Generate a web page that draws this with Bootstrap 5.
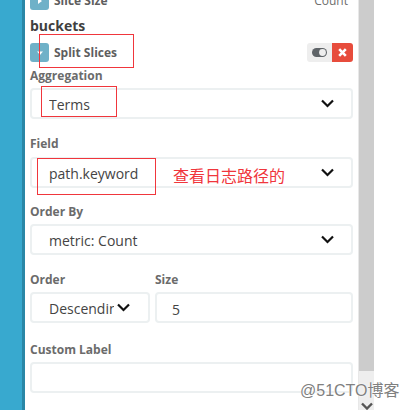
<!doctype html>
<html lang="zh">
<head>
<meta charset="utf-8">
<title>Split Slices</title>
<link rel="stylesheet" href="https://cdn.jsdelivr.net/npm/bootstrap@5.3.0/dist/css/bootstrap.min.css">
<style>
html,body{margin:0;height:410px;overflow:hidden;background:#fff;font-family:"Open Sans","Noto Sans CJK SC",sans-serif}
.stage{width:409px;height:410px;overflow:hidden}
.rail{width:25px;background:#38a9cf;border-right:3px solid #2a87a6;flex:none}
.pane{width:333px;flex:none;padding:0 5px;margin-top:-9px}
.bar{width:16px;flex:none;background:#eee;border-left:1px solid #e8e8e8}
.thumb{height:371px;background:#ccc}
.arrow-slot{height:39px;padding-top:31px}
.metric-row{height:19px}
.chip{width:19px;height:19px;border-radius:3px;background:#6fb1c8;flex:none}
.metric-name{font-size:12px;font-weight:700;color:#5e5e5e;line-height:19px;margin-left:5px}
.metric-count{font-size:12px;color:#6e6e6e;padding-right:5px}
.sect{font-size:14px;font-weight:700;color:#3f3f3f;line-height:19px;margin:6px 0 8px}
.tools{width:46px;height:19px;border-radius:3px;overflow:hidden}
.tool-a{width:25px;background:#eee}
.tool-b{width:21px;background:#e74c3c}
.lbl{display:block;font-size:12px;font-weight:700;color:#6b6b6b;line-height:16px;margin:0 0 4px}
.lbl-top{margin-top:6px}
.lbl-wide{margin-bottom:5px}
.form-select.fld,.form-control.fld{height:31px;border:2px solid #ecf0f1;border-radius:4px;font-size:14px;color:#444;padding:3px 0 2px 17px;box-shadow:none;background-color:#fff}
.form-select.fld{padding-right:34px;background-size:13px 9px;background-position:right 17px top 9px;background-image:url("data:image/svg+xml,%3csvg xmlns='http://www.w3.org/2000/svg' viewBox='0 0 13 9'%3e%3cpath fill='none' stroke='%23111' stroke-width='2.2' d='M1 1.5l5.5 5.5 5.5-5.5'/%3e%3c/svg%3e")}
.form-select.fld.tight{background-position:right 18px top 9px}
.form-control.num{padding-left:15px;padding-top:5px}
.gap-a{margin-bottom:17px}
.gap-c{margin-bottom:16px}
.gap-b{margin-bottom:19px}
.col-order{width:120px;flex:none}
.col-size{flex:1;margin-left:5px}
.mark-box{position:absolute;border:1px solid #f0363c;pointer-events:none}
.box-a{left:39px;top:34px;width:95px;height:34px}
.box-b{left:41px;top:86px;width:76px;height:31px}
.box-c{left:37px;top:158px;width:119px;height:37px}
.note{position:absolute;left:173px;top:164px;font-size:16px;line-height:22px;color:#f0363c;font-family:"Noto Sans CJK SC",sans-serif;white-space:nowrap}
.stamp{position:absolute;left:300px;top:381px;font-size:16px;line-height:20px;color:#808080;font-family:"Liberation Sans","Noto Sans CJK SC",sans-serif;white-space:nowrap;text-shadow:0 0 1px #fff,0 0 2px #fff}
</style>
</head>
<body>
<div class="stage d-flex position-relative">
  <div class="rail"></div>
  <div class="pane">
    <div class="metric-row d-flex align-items-center">
      <span class="chip d-flex align-items-center justify-content-center"><svg width="8" height="8" viewBox="0 0 8 8"><path d="M2 1l4 3-4 3z" fill="#fff"/></svg></span>
      <span class="metric-name flex-grow-1">Slice Size</span>
      <span class="metric-count">Count</span>
    </div>
    <div class="sect">buckets</div>
    <div class="metric-row d-flex align-items-center">
      <span class="chip d-flex align-items-center justify-content-center"><svg width="8" height="8" viewBox="0 0 8 8"><path d="M1 2.5h6l-3 3.5z" fill="#fff"/></svg></span>
      <span class="metric-name flex-grow-1">Split Slices</span>
      <span class="tools d-flex">
        <span class="tool-a d-flex align-items-center justify-content-center"><svg width="15" height="9" viewBox="0 0 15 9"><rect width="15" height="9" rx="4.5" fill="#5f6468"/><circle cx="10.5" cy="4.5" r="3.4" fill="#eee"/></svg></span>
        <span class="tool-b d-flex align-items-center justify-content-center"><svg width="9" height="9" viewBox="0 0 9 9"><path d="M1.2 1.2l6.6 6.6M7.8 1.2l-6.6 6.6" stroke="#fff" stroke-width="2.6"/></svg></span>
      </span>
    </div>
    <label class="lbl lbl-top" for="agg">Aggregation</label>
    <select class="form-select fld gap-a" id="agg"><option>Terms</option></select>
    <label class="lbl lbl-wide" for="fld">Field</label>
    <select class="form-select fld gap-c" id="fld"><option>path.keyword</option></select>
    <label class="lbl" for="ord">Order By</label>
    <select class="form-select fld gap-a" id="ord"><option>metric: Count</option></select>
    <div class="d-flex gap-b">
      <div class="col-order">
        <label class="lbl" for="dir">Order</label>
        <select class="form-select fld tight" id="dir"><option>Descending</option></select>
      </div>
      <div class="col-size">
        <label class="lbl" for="sz">Size</label>
        <input class="form-control fld num" id="sz" value="5">
      </div>
    </div>
    <label class="lbl" for="cus">Custom Label</label>
    <input class="form-control fld" id="cus">
  </div>
  <div class="bar d-flex flex-column">
    <div class="thumb"></div>
    <div class="arrow-slot d-flex justify-content-center"><svg width="12" height="9" viewBox="0 0 12 9"><path d="M1 1.5l5 5 5-5" fill="none" stroke="#555" stroke-width="2.4"/></svg></div>
  </div>
  <div class="mark-box box-a"></div>
  <div class="mark-box box-b"></div>
  <div class="mark-box box-c"></div>
  <div class="note">查看日志路径的</div>
  <div class="stamp">@51CTO博客</div>
</div>
<script src="https://cdn.jsdelivr.net/npm/bootstrap@5.3.0/dist/js/bootstrap.bundle.min.js"></script>
</body>
</html>
